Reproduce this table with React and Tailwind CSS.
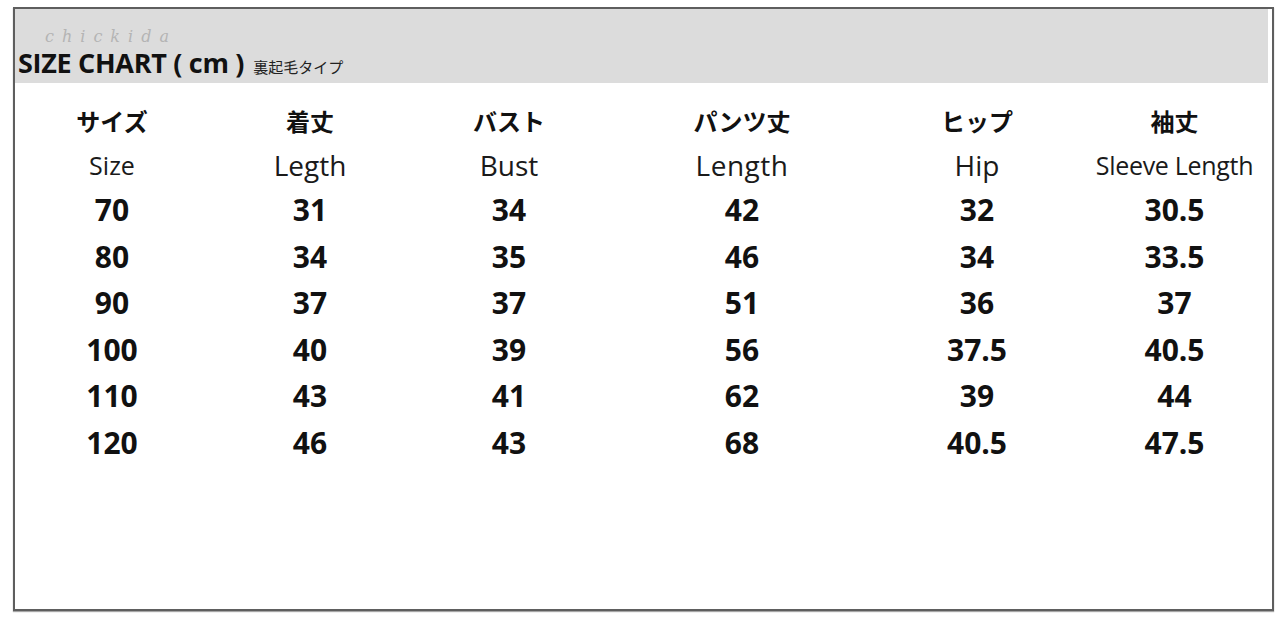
import React from "react";

const jp = ["サイズ", "着丈", "バスト", "パンツ丈", "ヒップ", "袖丈"];
const en = [
  { t: "Size", c: "text-[25px]" },
  { t: "Legth", c: "text-[28px]" },
  { t: "Bust", c: "text-[28px]" },
  { t: "Length", c: "text-[28px] tracking-[0.5px]" },
  { t: "Hip", c: "text-[28px]" },
  { t: "Sleeve Length", c: "text-[25px] tracking-[-0.3px]" },
];
const rows = [
  ["70", "31", "34", "42", "32", "30.5"],
  ["80", "34", "35", "46", "34", "33.5"],
  ["90", "37", "37", "51", "36", "37"],
  ["100", "40", "39", "56", "37.5", "40.5"],
  ["110", "43", "41", "62", "39", "44"],
  ["120", "46", "43", "68", "40.5", "47.5"],
];

const grid =
  "grid grid-cols-[194px_202px_196px_270px_200px_195px] text-center";

export default function App() {
  return (
    <div className="w-[1280px] h-[618px] bg-white pt-[7px] pl-[13px] overflow-hidden">
      <div className="w-[1261px] h-[604px] border-2 border-[#5e5e5e] shadow-[0_1px_1px_rgba(0,0,0,0.35)] flex flex-col">
        <div className="h-[74px] mr-[4px] bg-[#dcdcdc] flex flex-col pt-[20px] pb-[5px]">
          <div
            className="ml-[30px] h-[16px] leading-[16px] text-[16px] italic tracking-[8px] text-[#b4b4b4]"
            style={{ fontFamily: '"DejaVu Serif", serif' }}
          >
            chickida
          </div>
          <div className="mt-[3px] pl-[3px] flex items-baseline h-[30px]">
            <span
              className="text-[27px] leading-[30px] font-bold tracking-[-0.3px] text-[#111]"
              style={{ fontFamily: '"Open Sans", sans-serif' }}
            >
              SIZE CHART ( cm )
            </span>
            <span
              className="ml-[9px] text-[15px] text-[#222]"
              style={{ fontFamily: '"Noto Sans CJK JP", sans-serif' }}
            >
              裏起毛タイプ
            </span>
          </div>
        </div>
        <div className="pt-[16px]">
          <div
            className={`${grid} h-[44px] leading-[44px] text-[24px] font-bold text-[#111]`}
            style={{ fontFamily: '"Noto Sans CJK JP", sans-serif' }}
          >
            {jp.map((t, i) => (
              <div key={i}>{t}</div>
            ))}
          </div>
          <div
            className={`${grid} h-[44px] leading-[44px] text-[#1a1a1a]`}
            style={{ fontFamily: '"Open Sans", sans-serif' }}
          >
            {en.map((e, i) => (
              <div key={i} className={e.c}>
                {e.t}
              </div>
            ))}
          </div>
          {rows.map((r, ri) => (
            <div
              key={ri}
              className={`${grid} h-[46.6px] leading-[46.6px] text-[30px] font-bold text-[#111]`}
              style={{ fontFamily: '"Open Sans", sans-serif' }}
            >
              {r.map((v, i) => (
                <div key={i}>{v}</div>
              ))}
            </div>
          ))}
        </div>
      </div>
    </div>
  );
}
